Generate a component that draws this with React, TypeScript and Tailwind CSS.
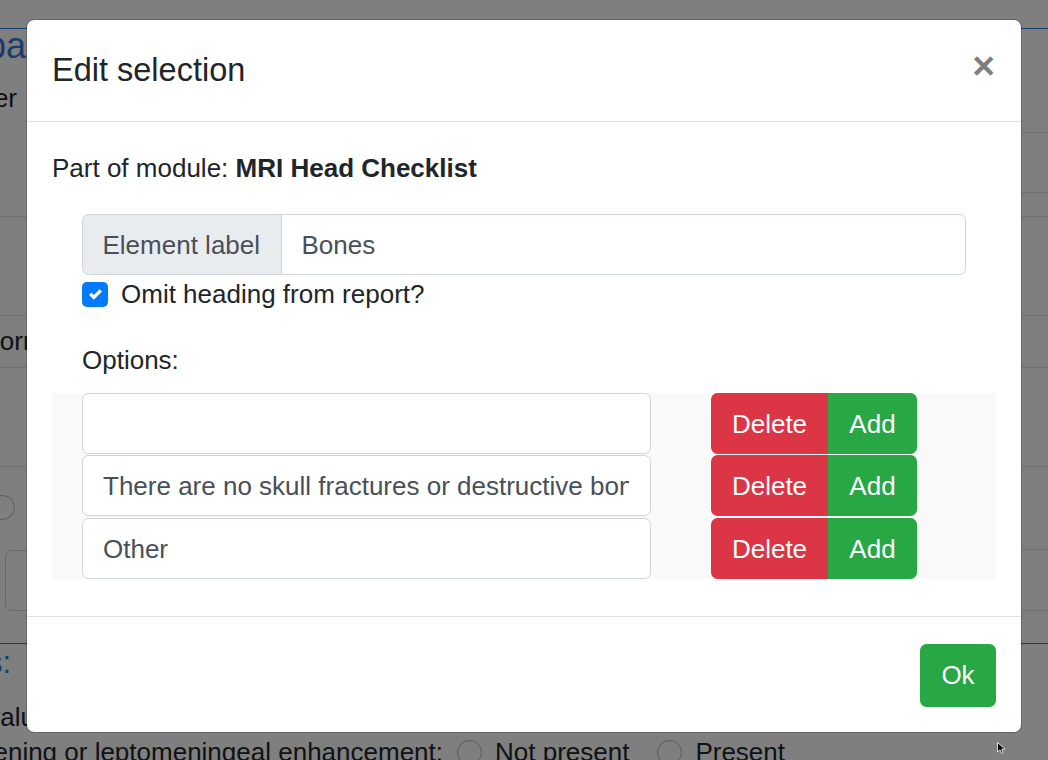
import React from "react";

const font = "font-['Liberation_Sans',Arial,Helvetica,sans-serif]";

function Background() {
  return (
    <div className="bg-white text-[26px] leading-[39px] text-[#212529]">
      <div className="h-[29px] border-b border-[#3478d8]" />
      {/* block 1: 29 -> 217 */}
      <div className="flex h-[188px] border-b border-[#dee2e6]">
        <div className="w-[520px] shrink-0">
          <div className="flex h-[33px] items-center">
            <div className="flex w-[26px] justify-end">
              <span className="whitespace-nowrap text-[36px] leading-[43px] text-[#3478d8]">Compa</span>
            </div>
          </div>
          <div className="flex h-[72px] items-center">
            <div className="flex w-[17px] justify-end">
              <span className="whitespace-nowrap">Reader</span>
            </div>
          </div>
        </div>
        <div className="flex-1">
          <div className="h-[104px] border-b border-[#dee2e6]" />
          <div className="h-[60px] border-b border-[#dee2e6]" />
        </div>
      </div>
      {/* block 2 */}
      <div className="h-[99px] border-b border-[#dee2e6]" />
      {/* block 3 */}
      <div className="flex h-[52px] items-center border-b border-[#dee2e6]">
        <span className="-ml-[19px] whitespace-nowrap">Norm</span>
      </div>
      {/* block 4 */}
      <div className="h-[99px] border-b border-[#dee2e6]" />
      {/* block 5 */}
      <div className="flex">
        <div className="w-[520px] shrink-0">
          <div className="flex h-[80px] items-center">
            <span className="-ml-[10px] h-[25px] w-[25px] rounded-full border border-[#adb5bd] bg-white" />
          </div>
          <div className="h-[64px] pt-[3px] pl-[5px]">
            <div className="h-[61px] rounded-[6.5px] border border-[#ced4da] bg-white" />
          </div>
        </div>
        <div className="flex-1">
          <div className="h-[83px] border-b border-[#dee2e6]" />
          <div className="h-[61px] border-b border-[#dee2e6]" />
        </div>
      </div>
      {/* block 6 */}
      <div className="h-[33px] border-b border-[#3478d8]" />
      {/* block 7 */}
      <div className="flex h-[37px] items-center">
        <div className="flex w-[11px] justify-end">
          <span className="whitespace-nowrap text-[31px] leading-[37px] text-[#3478d8]">Findings:</span>
        </div>
      </div>
      <div className="mt-[17px] h-[35px]">
        <span className="-ml-[30px] block whitespace-nowrap">Evalu</span>
      </div>
      <div className="flex h-[39px] items-center">
        <div className="flex w-[443px] justify-end">
          <span className="whitespace-nowrap">Dural thickening or leptomeningeal enhancement:</span>
        </div>
        <span className="ml-[14px] h-[25px] w-[25px] shrink-0 rounded-full border border-[#adb5bd] bg-white" />
        <span className="ml-[13px] whitespace-nowrap">Not present</span>
        <span className="ml-[28px] h-[25px] w-[25px] shrink-0 rounded-full border border-[#adb5bd] bg-white" />
        <span className="ml-[13px] whitespace-nowrap">Present</span>
      </div>
    </div>
  );
}

const options = [
  "",
  "There are no skull fractures or destructive bony lesions.",
  "Other",
];

function Modal() {
  return (
    <div className="absolute left-[26px] top-[19px] w-[996px] rounded-[8px] border border-black/20 bg-white bg-clip-padding text-[#212529]">
      <div className="flex items-start border-b border-[#dee2e6] px-[25px] py-[26px]">
        <h5 className="m-0 text-[32.5px] font-medium leading-[48.75px]">Edit selection</h5>
        <button
          type="button"
          className="-mt-[26px] -mr-[25px] -mb-[26px] ml-auto p-[26px] text-[39px] font-bold leading-none text-black opacity-50"
        >
          ×
        </button>
      </div>
      <div className="px-[25px] pt-[27px] pb-[26px] text-[26px] leading-[39px]">
        <p>
          Part of module: <strong className="font-bold">MRI Head Checklist</strong>
        </p>
        <div className="mt-[26px] px-[30px]">
          <div className="flex h-[61px]">
            <span className="flex w-[200px] shrink-0 items-center rounded-l-[6.5px] border border-[#ced4da] bg-[#e9ecef] px-[19.5px] pt-[2px] text-[#495057]">
              Element label
            </span>
            <input
              readOnly
              value="Bones"
              className="h-full min-w-0 flex-1 rounded-r-[6.5px] border border-l-0 border-[#ced4da] bg-white px-[19.5px] pt-[2px] text-[26px] text-[#495057] outline-none"
            />
          </div>
          <div className="flex h-[39px] items-center gap-[13px]">
            <span className="flex h-[25px] w-[26px] items-center justify-center rounded-[5px] bg-[#007bff]">
              <svg width="13" height="13" viewBox="0 0 8 8">
                <path fill="#fff" d="M6.564.75l-3.59 3.612-1.538-1.55L0 4.26 2.974 7.25 8 2.193z" />
              </svg>
            </span>
            <span className="pt-[1px]">Omit heading from report?</span>
          </div>
          <div className="mt-[26px] pt-[1px]">Options:</div>
        </div>
        <div className="mt-[13px] mb-[11px] flex flex-col gap-[1.5px] bg-[#f9f9f9] pl-[30px]">
          {options.map((o, i) => (
            <div key={i} className="flex h-[61px]">
              <input
                readOnly
                value={o}
                className="h-full w-[569px] rounded-[6.5px] border border-[#ced4da] bg-white pl-[20px] pr-[21px] pt-[2px] text-[26px] text-[#495057] outline-none"
              />
              <div className="ml-[60px] flex">
                <button type="button" className="w-[117px] rounded-l-[6.5px] bg-[#dc3545] pt-[2px] text-[26px] text-white">
                  Delete
                </button>
                <button type="button" className="w-[89px] rounded-r-[6.5px] bg-[#28a745] pt-[2px] text-[26px] text-white">
                  Add
                </button>
              </div>
            </div>
          ))}
        </div>
      </div>
      <div className="flex justify-end border-t border-[#dee2e6] pt-[27px] pb-[25px] pr-[25px]">
        <button type="button" className="h-[63px] w-[76px] rounded-[6.5px] bg-[#28a745] pt-[1px] text-[26px] leading-[39px] text-white">
          Ok
        </button>
      </div>
    </div>
  );
}

export default function App() {
  return (
    <div className={`relative h-[760px] w-full overflow-hidden ${font}`}>
      <Background />
      <div className="absolute inset-0 bg-black/50" />
      <Modal />
      <svg className="absolute left-[997px] top-[742px]" width="9" height="12" viewBox="0 0 9 12">
        <path d="M0.5 0.5 L0.5 10 L3 7.8 L4.8 11.5 L6.3 10.8 L4.6 7.2 L8 7.2 Z" fill="#000" stroke="#fff" strokeWidth="0.8" />
      </svg>
    </div>
  );
}
